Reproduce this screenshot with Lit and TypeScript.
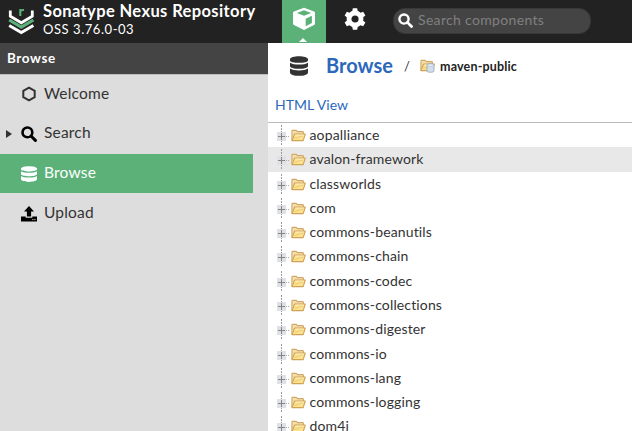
import { LitElement, html, svg, css } from "lit";
import { customElement, property } from "lit/decorators.js";

const FOLDERS = [
  "aopalliance", "avalon-framework", "classworlds", "com", "commons-beanutils",
  "commons-chain", "commons-codec", "commons-collections", "commons-digester",
  "commons-io", "commons-lang", "commons-logging", "dom4j",
];

const folderShape = svg`
  <path d="M.9 12.4V3.2Q.9 2.4 1.7 2.4H5.2L6.4 3.6H11.6Q12.4 3.6 12.4 4.4V6.2" fill="#f3e0ae" stroke="#d3a765" stroke-width="1.1"/>
  <path d="M3.6 6H14.3L12.2 12.6H1L3.6 6Z" fill="#fbe28f" stroke="#d0a258" stroke-width="1.1" stroke-linejoin="round"/>
  <path d="M3.4 10.2Q7 10 8.2 8.8Q9.2 8 12.2 8" fill="none" stroke="#e6c06d" stroke-width=".8"/>
  <path d="M4.4 7.1H12.8" stroke="#fff3c4" stroke-width=".8"/>`;

const glass = svg`<circle cx="6.4" cy="6.4" r="4.9" fill="none" stroke="currentColor" stroke-width="2.6"/>
  <path d="M10 10L14.4 14.4" stroke="currentColor" stroke-width="3" stroke-linecap="round"/>`;

const database = svg`
  <path fill="currentColor" d="M0 2.6C0 -.7 16 -.7 16 2.6V3.3C16 6.2 0 6.2 0 3.3Z
    M0 5.3C3 7.3 13 7.3 16 5.3V8C16 11 0 11 0 8Z
    M0 10C3 12 13 12 16 10V13.1C16 16.8 0 16.8 0 13.1Z"/>`;

const ICONS: Record<string, unknown> = {
  Welcome: svg`<path d="M8 1.6L13.7 4.8V11.2L8 14.4L2.3 11.2V4.8Z" fill="none" stroke="#333" stroke-width="2"/>`,
  Search: glass,
  Browse: database,
  Upload: svg`<path d="M8 0L13 5.4H10.1V10.6H5.9V5.4H3Z"/>
    <path d="M0 10.5H4.7V11.8H11.3V10.5H16V15.6H0Z"/><path d="M11.3 13.6H12.4M13.4 13.6H14.5" stroke="#ddd"/>`,
};

@customElement("nx-header")
class NxHeader extends LitElement {
  static styles = css`
    :host { display: flex; height: 43px; background: #222; color: #fff; }
    .logo { width: 28px; height: 29px; margin: 7px 7px 0 8px; flex: none; }
    .names { width: 239px; padding-top: 3px; box-sizing: border-box; }
    .product { font-size: 16.5px; font-weight: 700; line-height: 19px; letter-spacing: .38px; white-space: nowrap; margin-top: -1px; }
    .version { font-size: 13px; line-height: 16px; letter-spacing: .55px; }
    .mode { width: 44px; height: 43px; display: flex; flex-direction: column; align-items: center; }
    .active { background: #5bb178; }
    .mode svg { display: block; }
    .cube { width: 24px; height: 24px; margin-top: 7px; }
    .mark { width: 8px; height: 4px; margin-top: 7px; margin-right: 2px; }
    .gear { width: 22px; height: 22px; margin-top: 8px; margin-left: 14px; }
    .search { display: flex; align-items: center; width: 198px; height: 26px; box-sizing: border-box;
      margin: 8px 0 0 23px; padding: 0 4px; border: 1px solid #383838; border-radius: 12px; background: #444; }
    .search svg { width: 15px; height: 15px; margin: 0 5px 2px 0; }
    .hint { font-size: 14px; color: #808080; white-space: nowrap; line-height: 22px; letter-spacing: .33px; margin-top: -2px; }
  `;
  render() {
    return html`
      <svg class="logo" viewBox="0 0 28 29" fill="none">
        <path d="M2.3 3.5V9.2L13.3 15.8L24.3 9.2V3.5" stroke="#fff" stroke-width="2.8"/>
        <path d="M1.2 13L13.3 20.2L25.4 13" stroke="#5bb178" stroke-width="3.2"/>
        <path d="M1.2 18.4L13.3 25.6L25.4 18.4" stroke="#fff" stroke-width="2.9"/>
        <path d="M12.3 9V2M12.3 4.5Q13 2.6 16 3" stroke="#5bb178" stroke-width="2"/>
      </svg>
      <div class="names">
        <div class="product">Sonatype Nexus Repository</div>
        <div class="version">OSS 3.76.0-03</div>
      </div>
      <div class="mode active">
        <svg class="cube" viewBox="0 0 24 24">
          <path d="M12 1.2L22.5 5.2V17.3L12 22.5L1.5 17.3V5.2Z" fill="#fff" stroke="#fff" stroke-width="1" stroke-linejoin="round"/>
          <path d="M4.8 6L12 3.3L19.2 6L12 8.8Z" fill="#5bb178"/>
          <path d="M13.7 11.7L19.9 8.8V16.1L13.7 19.2Z" fill="#5bb178"/>
        </svg>
        <svg class="mark" viewBox="0 0 8 4"><path d="M0 4L4 0L8 4Z" fill="#fff"/></svg>
      </div>
      <div class="mode">
        <svg class="gear" viewBox="0 0 22 22" fill="#fff">
          <circle cx="11" cy="11" r="6" fill="none" stroke="#fff" stroke-width="4.8"/>
          ${[0, 60, 120, 180, 240, 300].map((a) => svg`<path transform=${`rotate(${a} 11 11)`} d="M8 5L8.8 .3H13.2L14 5Z"/>`)}
        </svg>
      </div>
      <div class="search">
        <svg viewBox="0 0 16 16">${glass}</svg><span class="hint">Search components</span>
      </div>`;
  }
}

@customElement("nx-menu")
class NxMenu extends LitElement {
  @property() selected = "Browse";
  static styles = css`
    :host { display: block; width: 268px; flex: none; background: #ddd; color: #333; }
    .title { height: 31px; padding-left: 7px; background: #444; color: #fff;
      font-size: 13.5px; font-weight: 700; line-height: 31px; letter-spacing: .6px; }
    .items { border-top: 1px solid #bdbdbd; margin-bottom: -1px; }
    .item { display: flex; align-items: center; width: 253px; height: 39px; margin-bottom: 1px; font-size: 15.5px; letter-spacing: .2px; }
    .item:first-child { height: 38px; }
    .on { background: #5bb178; color: #fff; }
    .arrow { width: 6px; height: 8px; margin-left: 6px; margin-right: 9px; }
    .icon { width: 16px; height: 16px; margin-right: 7px; color: #000; }
    .on .icon { color: #fff; }
    .label { margin-top: -3px; }
  `;
  render() {
    return html`<div class="title">Browse</div>
      <div class="items">${Object.keys(ICONS).map((name) => html`
        <div class="item ${name === this.selected ? "on" : ""}">
          <svg class="arrow" viewBox="0 0 6 8">${name === "Search" ? svg`<path d="M0 0L6 4L0 8Z" fill="#333"/>` : ""}</svg>
          <svg class="icon" viewBox="0 0 16 16">${ICONS[name]}</svg>
          <span class="label">${name}</span>
        </div>`)}</div>`;
  }
}

@customElement("nx-tree")
class NxTree extends LitElement {
  @property() selected = "avalon-framework";
  static styles = css`
    :host { display: block; border-top: 1px solid #bbb; }
    .row { display: flex; align-items: center; height: 24.27px; padding-left: 7px; font-size: 14px; letter-spacing: .14px;
      color: #333; white-space: nowrap; }
    .on { background: #e8e8e8; }
    .elbow { width: 16px; height: 24px; flex: none; }
    .folder { width: 15px; height: 14px; margin-right: 3.5px; flex: none; }
    .name { line-height: 24px; }
  `;
  render() {
    return FOLDERS.map((name) => html`
      <div class="row ${name === this.selected ? "on" : ""}">
        <svg class="elbow" viewBox="0 0 16 24" shape-rendering="crispEdges">
          <path d="M6.5 2V23" stroke="#999" stroke-dasharray="2 1"/>
          <rect x="2" y="9" width="9" height="9" rx="1" fill="#e0e1e6"/>
          <path d="M3 13.5H10M6.5 10V17" stroke="#858585"/>
          <path d="M11 13.5H15" stroke="#aaa" stroke-dasharray="1 1"/>
        </svg>
        <svg class="folder" viewBox="0 0 15 14">${folderShape}</svg>
        <span class="name">${name}</span>
      </div>`);
  }
}

@customElement("app-root")
class AppRoot extends LitElement {
  static styles = css`
    :host { display: flex; flex-direction: column; height: 431px; overflow: hidden; background: #fff;
      font-family: Lato, "Open Sans", sans-serif; font-variant-ligatures: none; }
    .body { display: flex; flex: 1; min-height: 0; }
    .main { flex: 1; min-width: 0; overflow: hidden; }
    .crumbs { display: flex; align-items: center; height: 45px; padding-left: 22px; }
    .db { width: 18px; height: 20px; margin-right: 18px; color: #333; }
    .page { font-size: 20px; font-weight: 700; color: #2b68bc; width: 67px; margin-top: -2px; }
    .slash { font-size: 13px; width: 5px; margin: 0 11px 0 11px; color: #333; }
    .repo { width: 15px; height: 15px; margin-right: 5px; }
    .current { font-size: 12.5px; font-weight: 700; color: #222; padding-top: 1px; letter-spacing: .17px; }
    .tools { height: 34px; line-height: 34px; padding-left: 7px; font-size: 14px; color: #2b68bc; }
  `;
  render() {
    return html`<nx-header></nx-header>
      <div class="body">
        <nx-menu></nx-menu>
        <div class="main">
          <div class="crumbs">
            <svg class="db" viewBox="0 0 16 16" preserveAspectRatio="none">${database}</svg>
            <span class="page">Browse</span><span class="slash">/</span>
            <svg class="repo" viewBox="0 0 15 15">${folderShape}
              <path d="M7 7C7 5.3 14 5.3 14 7V13C14 14.7 7 14.7 7 13Z" fill="#d3dfec" stroke="#93a5b9" stroke-width=".8"/>
              <ellipse cx="10.5" cy="7.2" rx="3.2" ry="1.2" fill="#f1f6fb" stroke="#93a5b9" stroke-width=".5"/>
            </svg>
            <span class="current">maven-public</span>
          </div>
          <div class="tools">HTML View</div>
          <nx-tree></nx-tree>
        </div>
      </div>`;
  }
}
